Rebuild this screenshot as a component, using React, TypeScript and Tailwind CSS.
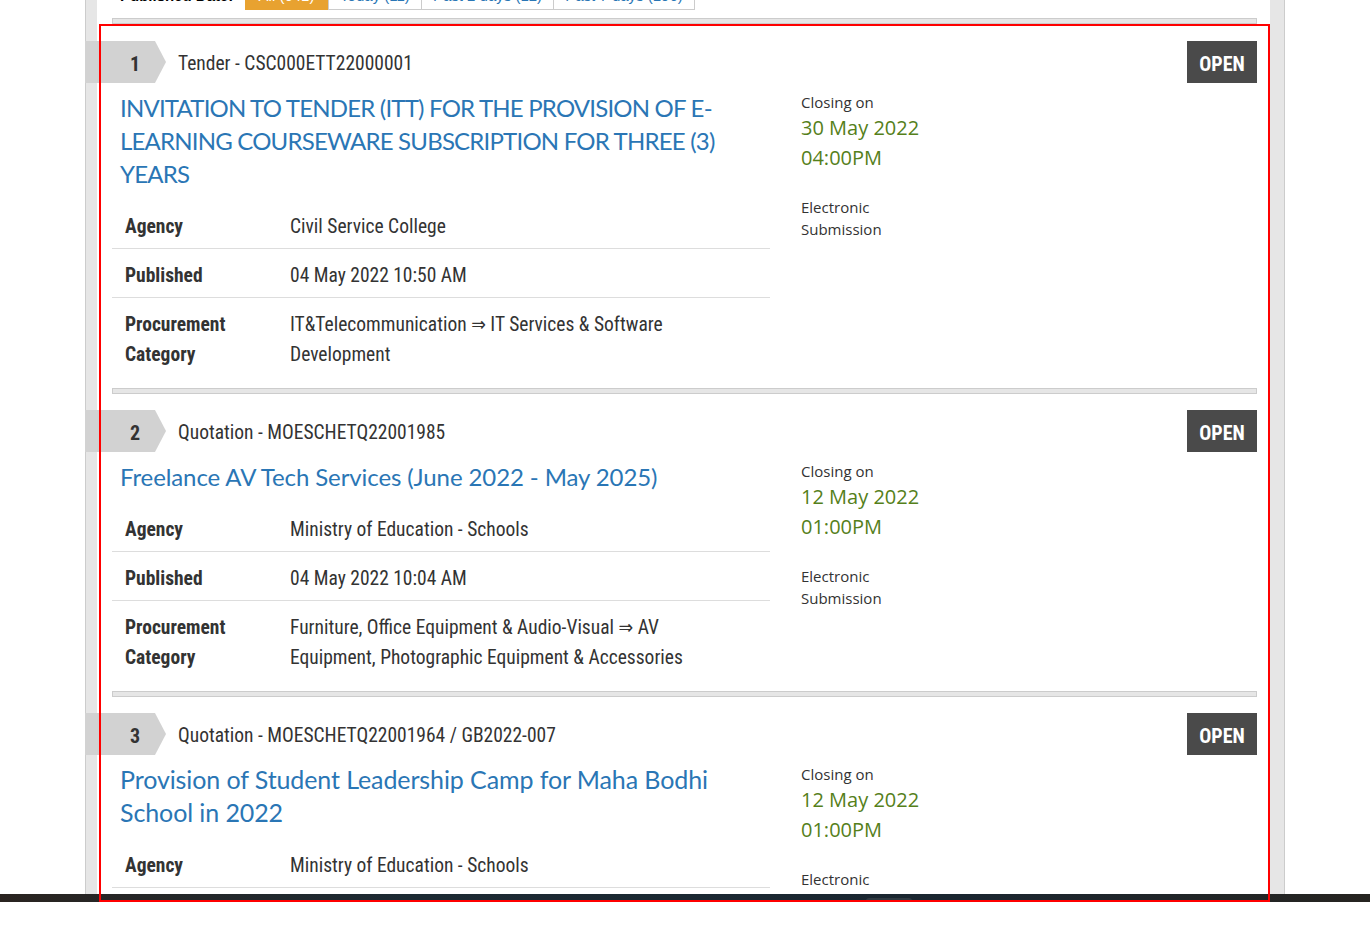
import React from "react";

const COND = "font-['Roboto_Condensed','Liberation_Sans_Narrow','DejaVu_Sans_Condensed',sans-serif]";

type Row = { label: string[]; value: string[] };
type Item = {
  n: number;
  ref: string;
  title: string[];
  track: string;
  date: string;
  time: string;
  rows: Row[];
};

const items: Item[] = [
  {
    n: 1,
    ref: "Tender - CSC000ETT22000001",
    title: [
      "INVITATION TO TENDER (ITT) FOR THE PROVISION OF E-",
      "LEARNING COURSEWARE SUBSCRIPTION FOR THREE (3)",
      "YEARS",
    ],
    track: "text-[24px] tracking-[-0.8px]",
    date: "30 May 2022",
    time: "04:00PM",
    rows: [
      { label: ["Agency"], value: ["Civil Service College"] },
      { label: ["Published"], value: ["04 May 2022 10:50 AM"] },
      {
        label: ["Procurement", "Category"],
        value: ["IT&Telecommunication \u21D2 IT Services & Software", "Development"],
      },
    ],
  },
  {
    n: 2,
    ref: "Quotation - MOESCHETQ22001985",
    title: ["Freelance AV Tech Services (June 2022 - May 2025)"],
    track: "text-[24px] tracking-[-0.1px]",
    date: "12 May 2022",
    time: "01:00PM",
    rows: [
      { label: ["Agency"], value: ["Ministry of Education - Schools"] },
      { label: ["Published"], value: ["04 May 2022 10:04 AM"] },
      {
        label: ["Procurement", "Category"],
        value: [
          "Furniture, Office Equipment & Audio-Visual \u21D2 AV",
          "Equipment, Photographic Equipment & Accessories",
        ],
      },
    ],
  },
  {
    n: 3,
    ref: "Quotation - MOESCHETQ22001964 / GB2022-007",
    title: ["Provision of Student Leadership Camp for Maha Bodhi", "School in 2022"],
    track: "text-[25px] tracking-[-0.1px]",
    date: "12 May 2022",
    time: "01:00PM",
    rows: [
      { label: ["Agency"], value: ["Ministry of Education - Schools"] },
      { label: ["Published"], value: ["04 May 2022 10:00 AM"] },
      {
        label: ["Procurement", "Category"],
        value: ["Services \u21D2 Training & Education", ""],
      },
    ],
  },
];

function Bar() {
  return <div className="h-[6px] border border-[#cccccc] bg-[#e6e6e6]" />;
}

function TenderItem({ item, last, first }: { item: Item; last: boolean; first: boolean }) {
  return (
    <div className={first ? "pt-[17px]" : "pt-[16px]"}>
      <div className="flex items-center justify-between h-[42px]">
        <div className="flex items-center">
          <div className="-ml-[27px] w-[81px] h-[42px] bg-[#d2d2d2] [clip-path:polygon(0_0,70px_0,100%_50%,70px_100%,0_100%)] flex items-center pl-[45px]">
            <span className={`${COND} pt-[4px] text-[20px] font-bold text-[#333]`}>{item.n}</span>
          </div>
          <span className={`${COND} pt-[4px] ml-[12px] text-[19.5px] text-[#333]`}>{item.ref}</span>
        </div>
        <div className={`w-[70px] h-[42px] pt-[4px] bg-[#4a4a4a] flex items-center justify-center ${COND} text-[20px] font-bold text-white`}>
          OPEN
        </div>
      </div>
      <div className="flex">
        <div className="w-[658px]">
          <div className={`mt-[8px] pl-[8px] font-['Lato',sans-serif] ${item.track} leading-[33px] text-[#2a76b5] whitespace-nowrap`}>
            {item.title.map((t, i) => (
              <div key={i}>{t}</div>
            ))}
          </div>
          <div className="mt-[10px]">
            {item.rows.map((r, i) => (
              <div
                key={i}
                className={`flex pt-[12px] pb-[6px] ${i < item.rows.length - 1 ? "border-b border-[#dddddd]" : ""} ${COND} text-[19.5px] leading-[30px] text-[#333]`}
              >
                <div className="w-[178px] pl-[13px] font-bold">
                  {r.label.map((l, j) => (
                    <div key={j}>{l}</div>
                  ))}
                </div>
                <div className="flex-1 whitespace-nowrap">
                  {r.value.map((v, j) => (
                    <div key={j}>{v}</div>
                  ))}
                </div>
              </div>
            ))}
          </div>
        </div>
        <div className="ml-[31px] mt-[8px] font-['Open_Sans',sans-serif]">
          <div className="text-[15px] leading-[22px] text-[#333]">Closing on</div>
          <div className="text-[20px] leading-[30px] text-[#55801a]">{item.date}</div>
          <div className="text-[20px] leading-[30px] text-[#55801a]">{item.time}</div>
          <div className="mt-[23px] text-[15px] leading-[22px] text-[#333]">
            <div>Electronic</div>
            <div>Submission</div>
          </div>
        </div>
      </div>
      {!last && (
        <div className="mt-[12px]">
          <Bar />
        </div>
      )}
    </div>
  );
}

export default function App() {
  return (
    <div className="relative w-[1370px] h-[928px] bg-white overflow-hidden">
      <div className="h-[894px] overflow-hidden">
        <div className="ml-[85px] w-[1200px] h-full border-l border-r border-[#cccccc] bg-[#e6e6e6] pl-[11px] pr-[14px] flow-root">
          <div className="h-full bg-white pl-[15px] pr-[13px] flow-root">
            <div className="-mt-[18px] h-[28px] flex items-stretch font-['Liberation_Sans',sans-serif] text-[15px]">
              <div className="w-[133px] pl-[8px] flex items-center font-bold text-black">Published Date:</div>
              <div className="w-[83px] bg-[#e8a230] flex items-center justify-center text-white">All (641)</div>
              <div className="w-[94px] border border-[#cccccc] flex items-center justify-center text-[#2a76b5]">Today (11)</div>
              <div className="w-[132px] border border-l-0 border-[#cccccc] flex items-center justify-center text-[#2a76b5]">Past 2 days (12)</div>
              <div className="w-[141px] border border-l-0 border-[#cccccc] flex items-center justify-center text-[#2a76b5]">Past 7 days (196)</div>
            </div>
            <div className="mt-[8px]">
              <Bar />
            </div>
            {items.map((it, i) => (
              <TenderItem key={it.n} item={it} first={i === 0} last={i === items.length - 1} />
            ))}
          </div>
        </div>
      </div>
      <div className="h-[8px] bg-[linear-gradient(90deg,#2a2420,#1c2a33_30%,#1a2630_70%,#262420)] flex">
        <div className="ml-[866px] mt-[4px] w-[46px] h-[4px] rounded-t-[3px] bg-[#2f3a42]" />
      </div>
      <div className="absolute left-[99px] top-[24px] w-[1171px] h-[878px] border-2 border-[#ff0000] pointer-events-none" />
    </div>
  );
}
